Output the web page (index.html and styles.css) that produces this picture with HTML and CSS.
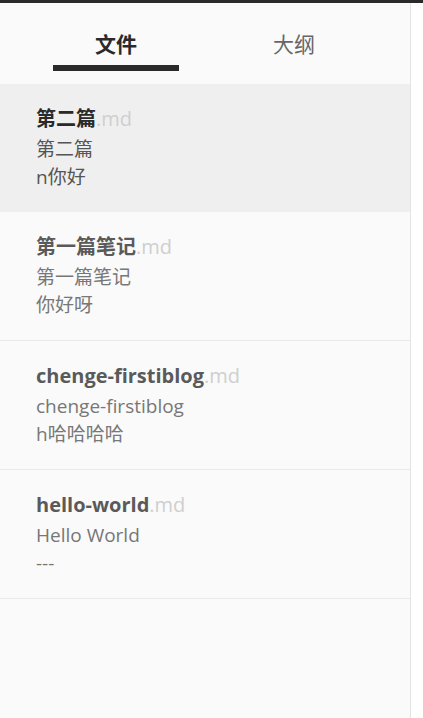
FILE: index.html
```html
<!DOCTYPE html>
<html lang="zh">
<head>
<meta charset="utf-8">
<link rel="stylesheet" href="styles.css">
</head>
<body>
<div class="topbar"></div>
<aside class="sidebar">
  <nav class="tabs">
    <div class="tab active">文件</div>
    <div class="tab">大纲</div>
  </nav>
  <ul class="files">
    <li class="file selected">
      <div class="title"><b>第二篇</b><span class="ext">.md</span></div>
      <div class="summary">第二篇<br>n你好</div>
    </li>
    <li class="file">
      <div class="title"><b>第一篇笔记</b><span class="ext">.md</span></div>
      <div class="summary">第一篇笔记<br>你好呀</div>
    </li>
    <li class="file">
      <div class="title"><b>chenge-firstiblog</b><span class="ext">.md</span></div>
      <div class="summary">chenge-firstiblog<br>h哈哈哈哈</div>
    </li>
    <li class="file">
      <div class="title"><b>hello-world</b><span class="ext">.md</span></div>
      <div class="summary">Hello World<br>---</div>
    </li>
  </ul>
</aside>
</body>
</html>
```
FILE: styles.css
```css
* { box-sizing: border-box; }
html, body { margin: 0; padding: 0; height: 100%; background: #fff; }
body {
  font-family: "Open Sans", "Noto Sans CJK SC", sans-serif;
  display: flex;
  flex-direction: column;
}
.topbar { height: 3px; background: #2a2a2a; flex: none; }
.sidebar {
  width: 411px;
  flex: 1;
  background: #fafafa;
  border-right: 1px solid #e4e4e4;
}
.tabs {
  display: flex;
  padding: 0 27px;
  height: 81px;
}
.tab {
  flex: 1;
  display: flex;
  justify-content: center;
  align-items: flex-start;
  padding-top: 26px;
  font-size: 21px;
  line-height: 30px;
  color: #666;
  position: relative;
}
.tab.active { color: #2a2a2a; font-weight: 700; }
.tab.active::after {
  content: "";
  position: absolute;
  left: 26px;
  right: 26px;
  top: 62px;
  height: 6px;
  background: #2a2a2a;
}
.files { list-style: none; margin: 0; padding: 0; }
.file {
  height: 129px;
  padding: 19px 36px 0;
  border-bottom: 1px solid #e9e9e9;
}
.file.selected { background: #efefef; height: 128px; border-bottom: 0; }
.title { font-size: 20px; line-height: 32px; color: #5a5a5a; }
.title b { font-weight: 700; }
.file.selected .title { color: #2a2a2a; }
.ext { color: #cfcfcf; font-weight: 400; }
.summary { font-size: 19px; line-height: 28px; color: #777; }
.file.selected .summary { color: #555; }
```
